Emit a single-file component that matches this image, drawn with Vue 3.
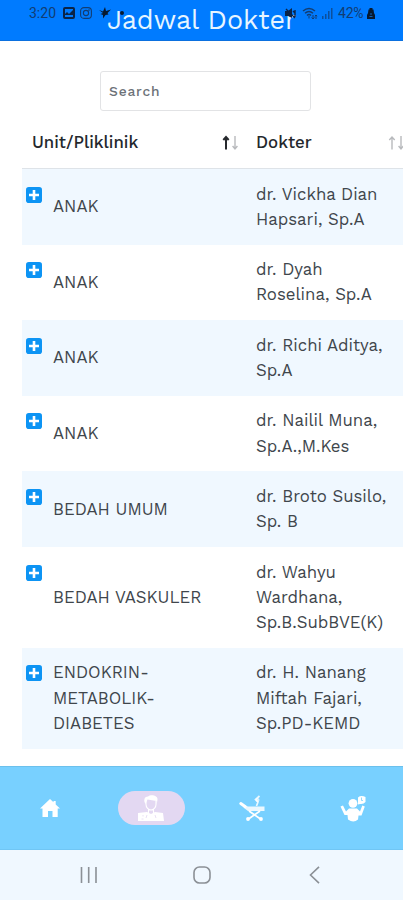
<script setup>
import { ref, computed } from 'vue'

const search = ref('')
const activeTab = ref('dokter')

const columns = [
  { key: 'unit', label: 'Unit/Pliklinik', sorted: true },
  { key: 'dokter', label: 'Dokter', sorted: false }
]

const schedules = [
  { id: 1, unit: ['ANAK'], dokter: ['dr. Vickha Dian', 'Hapsari, Sp.A'] },
  { id: 2, unit: ['ANAK'], dokter: ['dr. Dyah', 'Roselina, Sp.A'] },
  { id: 3, unit: ['ANAK'], dokter: ['dr. Richi Aditya,', 'Sp.A'] },
  { id: 4, unit: ['ANAK'], dokter: ['dr. Nailil Muna,', 'Sp.A.,M.Kes'] },
  { id: 5, unit: ['BEDAH UMUM'], dokter: ['dr. Broto Susilo,', 'Sp. B'] },
  { id: 6, unit: ['BEDAH VASKULER'], dokter: ['dr. Wahyu', 'Wardhana,', 'Sp.B.SubBVE(K)'] },
  { id: 7, unit: ['ENDOKRIN-', 'METABOLIK-', 'DIABETES'], dokter: ['dr. H. Nanang', 'Miftah Fajari,', 'Sp.PD-KEMD'] }
]

const filteredSchedules = computed(() => {
  const q = search.value.toLowerCase()
  return schedules.filter(row =>
      [...row.unit, ...row.dokter].join(' ').toLowerCase().includes(q)
  )
})
</script>

<template>
  <div class="screen">
    <header class="app-bar">
      <h1 class="title">Jadwal Dokter</h1>
      <div class="status-bar">
        <div class="status-left">
          <span class="clock">3:20</span>
          <svg class="gallery" width="12" height="12" viewBox="0 0 12 12">
            <path fill-rule="evenodd" d="M2 0h8a2 2 0 0 1 2 2v8a2 2 0 0 1-2 2H2a2 2 0 0 1-2-2V2a2 2 0 0 1 2-2zM2 2v5l2-2 2 2 4-4V2zM2 10h8V8H2z" />
          </svg>
          <svg class="insta" width="12" height="12" viewBox="0 0 12 12" fill="none" stroke="currentColor" stroke-width="1.1">
            <rect x=".6" y=".6" width="10.8" height="10.8" rx="3.4" />
            <circle cx="6" cy="6" r="2.6" />
            <circle cx="9" cy="3" r=".3" />
          </svg>
          <svg class="bird" width="12" height="12" viewBox="0 0 12 12">
            <path d="M0 3l4 1.500L6 0l1 4 5-1.500L8.500 6l1 1.500L6.500 8 4 11.500 4 8 1.500 7 4 6z" />
          </svg>
          <span class="dot"></span>
        </div>
        <div class="status-right">
          <svg class="mute" width="11" height="11" viewBox="0 0 11 11">
            <path d="M0 3h3l4-3v10L3 8H0z" />
            <path d="M1 1l9 9M8 3l2 2M10 2v7" fill="none" stroke="currentColor" stroke-width="1.4" />
          </svg>
          <svg class="wifi" width="16" height="13" viewBox="0 0 16 13" fill="none" stroke="currentColor" stroke-width="1.5">
            <path d="M1 4q6-5 12 0M3 6.300q4-3.500 8 0M5 8.500q2-2 4 0" />
            <path d="M7 9v2.500M11 8v4M9.500 10.500L11 12l1.500-1.500M14 12V8M12.800 9.200L14 8l1.200 1.200" stroke-width="1" />
          </svg>
          <svg class="signal" width="11" height="11" viewBox="0 0 11 11">
            <path d="M0 8h1.500v3H0zM3 6h1.500v5H3zM6 3h1.500v8H6zM9 0h1.500v11H9z" />
          </svg>
          <span class="battery-text">42%</span>
          <svg class="battery" width="8" height="11" viewBox="0 0 8 11">
            <path d="M2.500 0h3v1.500h1L7 5l1 2v4H0V7l1-2 .5-3.500h1z" />
            <path d="M3 6h2M2.500 8.500h3" stroke="#1476dc" stroke-width=".8" />
          </svg>
        </div>
      </div>
    </header>

    <main class="content">
      <input v-model="search" class="search" type="text" placeholder="Search" />

      <div class="table">
        <div class="row head">
          <div v-for="col in columns" :key="col.key" class="cell" :class="col.key">
            <span>{{ col.label }}</span>
            <svg class="sort" width="17" height="16" viewBox="0 0 17 16" fill="none" stroke="currentColor">
              <path :class="{ on: col.sorted }" class="arrow" d="M4 14.500V2M1.300 5L4 2l2.700 3" />
              <path class="arrow" d="M13 1v12.500M10.600 11l2.400 3 2.400-3" />
            </svg>
          </div>
        </div>
        <div v-for="row in filteredSchedules" :key="row.id" class="row item">
          <div class="cell unit">
            <svg class="plus" width="16" height="16" viewBox="0 0 16 16">
              <rect width="16" height="16" rx="2.800" fill="#0d94f4" />
              <path d="M8 3v10M3 8h10" stroke="#fff" stroke-width="2.600" />
            </svg>
            <div class="unit-name">
              <div v-for="line in row.unit" :key="line">{{ line }}</div>
            </div>
          </div>
          <div class="cell dokter">
            <div v-for="line in row.dokter" :key="line">{{ line }}</div>
          </div>
        </div>
      </div>
    </main>

    <nav class="tabs">
      <button class="tab" :class="{ active: activeTab === 'home' }" @click="activeTab = 'home'">
        <svg width="20" height="19" viewBox="0 0 20 19">
          <path d="M10 0l3.500 3.300V2h2.200v3.400L20 9.500h-2.300V18h-5.200v-6H8v6H2.500V9.500H0z" />
        </svg>
      </button>
      <button class="tab" :class="{ active: activeTab === 'dokter' }" @click="activeTab = 'dokter'">
        <svg width="26" height="27" viewBox="0 0 26 27">
          <path d="M6.500 7C5.500 3 8 1.500 10 1.500c2-2 9-2 9.500 2.500 0 2-.5 3-1 5V6l-9-1.500L7.500 9z" />
          <path d="M8 5.500v4c0 3 2.500 5.500 5 5.500s5-2.500 5-5.500V6M10.500 14v4M15.500 14v4" fill="none" stroke="#fff" stroke-width="1.100" />
          <path d="M0 18l9-1 4 2 4-2 8 1 1 8H0z" />
          <path d="M5 20v1.500M9 20l-1 3M17 20l1 3M3.500 24h2" stroke="#e3d8f2" stroke-width=".8" />
        </svg>
      </button>
      <button class="tab" :class="{ active: activeTab === 'rawat' }" @click="activeTab = 'rawat'">
        <svg class="stretcher" width="26" height="27" viewBox="0 0 26 27">
          <path d="M1.800 8.500L6 11.500" stroke="#fff" stroke-width="3" fill="none" stroke-linecap="round" />
          <path d="M3 9l6 2.500h16.500v4.500H9L5 13z" opacity=".85" />
          <path d="M17.500 11l1.500-4-2.500-2.500L20.500 1" stroke="#fff" stroke-width="1.700" fill="none" opacity=".85" />
          <circle cx="18.500" cy="5" r="2" opacity=".7" />
          <path d="M9.500 24L21 16M21.500 24L10 16" stroke="#fff" stroke-width="1.700" />
          <circle cx="9" cy="24" r="1.900" />
          <circle cx="22" cy="24" r="1.900" />
        </svg>
      </button>
      <button class="tab" :class="{ active: activeTab === 'pasien' }" @click="activeTab = 'pasien'">
        <svg width="26" height="27" viewBox="0 0 26 27">
          <circle cx="13" cy="8.300" r="4.400" />
          <path d="M9 13.500h8l3 3 2.300-6 2.500 1-3.300 9h-3l-.5 4q-4.500 4-10 0L7.500 20H4.500L.5 11.500l2.500-1 3 6z" />
          <path d="M18 2.500q3-2.500 7.500-.5v5q-2 2.500-5.500 2l-2 .5z" />
          <path d="M21.500 2.500v3h1.500" fill="none" stroke="#78d0ff" stroke-width=".8" />
        </svg>
      </button>
    </nav>

    <footer class="system-nav">
      <svg width="18" height="18" viewBox="0 0 18 18">
        <path d="M1.500 1v16M8.700 1v16M16 1v16" />
      </svg>
      <svg width="18" height="18" viewBox="0 0 18 18">
        <rect x="1" y="1" width="16" height="16" rx="5.500" />
      </svg>
      <svg width="18" height="18" viewBox="0 0 18 18">
        <path d="M13 .8L4.500 9l8.500 8.200" />
      </svg>
    </footer>
  </div>
</template>

<style>
body {
  margin: 0;
  overflow: hidden;
}
</style>

<style scoped>
.screen {
  width: 403px;
  height: 900px;
  display: flex;
  flex-direction: column;
  overflow: hidden;
  background: #fff;
  font-family: 'Work Sans', Inter, 'Liberation Sans', sans-serif;
  color: #40464c;
}

.app-bar {
  position: relative;
  height: 41px;
  flex-shrink: 0;
  background: #007bff;
  box-sizing: border-box;
  border-bottom: 1px solid #0b70df;
}

.title {
  margin: 0;
  text-align: center;
  color: #e6f5ff;
  font-size: 26.9px;
  font-weight: 400;
  line-height: 41px;
}

/* system status icons are painted over the app bar */
.status-bar {
  position: absolute;
  top: 4px;
  left: 29px;
  right: 28px;
  height: 18px;
  display: flex;
  justify-content: space-between;
  font-family: Roboto, sans-serif;
  font-size: 14px;
  color: #123d72;
}

.status-bar svg {
  fill: currentColor;
}

.status-bar svg[fill='none'] {
  fill: none;
}

.status-left,
.status-right {
  display: flex;
  align-items: center;
}

.clock {
  width: 34px;
}

.gallery {
  color: #0b2447;
  margin-right: 5px;
}

.bird {
  color: #07192f;
  margin-left: 7px;
}

.dot {
  width: 4px;
  height: 4px;
  margin-left: 9px;
  border-radius: 50%;
  background: #07192f;
}

.mute {
  color: #0b2447;
  margin-right: 6px;
}

.signal {
  margin: 0 5px 0 4px;
  opacity: 0.7;
}

.battery-text {
  width: 29px;
  letter-spacing: -0.2px;
}

.battery {
  color: #07192f;
}

.content {
  height: 725px;
  flex-shrink: 0;
  display: flex;
  flex-direction: column;
  box-sizing: border-box;
  padding: 30px 0 0 22px;
  overflow: hidden;
}

.search {
  width: 211px;
  height: 40px;
  flex-shrink: 0;
  box-sizing: border-box;
  margin-left: 78px;
  padding: 0 8px;
  border: 1px solid #e2e3e5;
  border-radius: 3px;
  outline: none;
  font-family: inherit;
  font-size: 13.8px;
  font-weight: 500;
  letter-spacing: 0.8px;
  background: #fff;
}

.search::placeholder {
  color: #6c7278;
  opacity: 1;
}

.table {
  width: 388px;
  font-size: 16.8px;
  line-height: 25.2px;
}

.row {
  display: grid;
  grid-template-columns: 224px 164px;
}

.row.head {
  height: 58px;
  box-sizing: border-box;
  padding-top: 7px;
  align-items: center;
  border-bottom: 1px solid #dee3e8;
  color: #24282d;
  font-weight: 500;
}

.row.head .cell {
  display: flex;
  align-items: center;
  justify-content: space-between;
  padding: 0 7px 0 10px;
}

.row.head .cell.dokter {
  padding-right: 5px;
}

.sort {
  color: #b8babd;
}

.arrow {
  stroke-width: 1.4;
}

.arrow.on {
  stroke: #26292d;
  stroke-width: 2;
}

.row.item {
  white-space: nowrap;
}

.row.item:nth-child(even) {
  background: #f0f8ff;
}

.row.item .cell {
  padding: 12.6px 10px;
}

.row.item .unit {
  display: flex;
  align-items: center;
  padding-left: 4px;
}

.plus {
  align-self: flex-start;
  margin: 5px 11px 0 0;
}

.tabs {
  height: 84px;
  flex-shrink: 0;
  display: grid;
  grid-template-columns: repeat(4, 1fr);
  align-items: center;
  justify-items: center;
  background: #78d0ff;
  box-sizing: border-box;
  border-top: 1px solid #6bc0ec;
  border-bottom: 1px solid #70c6f5;
}

.tab {
  width: 67px;
  height: 34px;
  padding: 0;
  border: 0;
  border-radius: 17px;
  background: transparent;
  display: flex;
  align-items: center;
  justify-content: center;
}

.tab.active {
  background: #e3d8f2;
}

.tab svg {
  fill: #fff;
}

.system-nav {
  height: 50px;
  flex-shrink: 0;
  display: flex;
  justify-content: center;
  align-items: center;
  gap: 95px;
  background: #f0f8ff;
}

.system-nav svg {
  fill: none;
  stroke: #8b9096;
  stroke-width: 1.6;
}
</style>
